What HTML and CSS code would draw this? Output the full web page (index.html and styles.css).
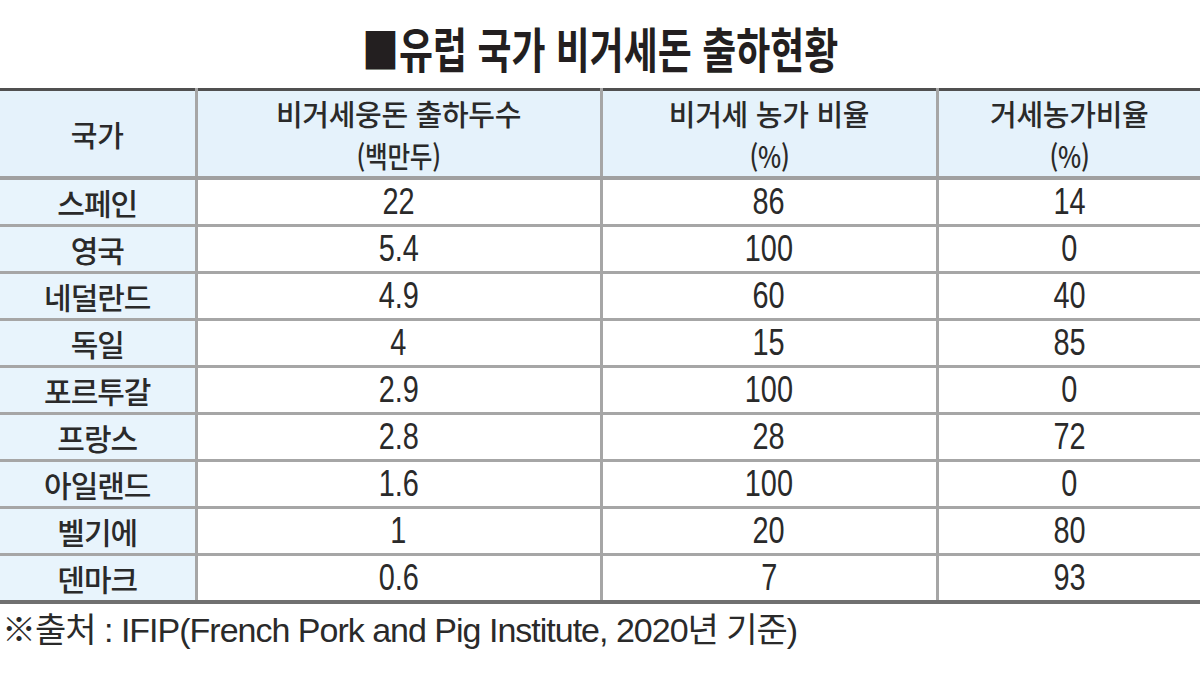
FILE: index.html
```html
<!DOCTYPE html>
<html lang="ko">
<head>
<meta charset="utf-8">
<title>유럽 국가 비거세돈 출하현황</title>
<link rel="stylesheet" href="styles.css">
</head>
<body>
<main class="page">
  <h1 class="title"><span class="title-text">■유럽 국가 비거세돈 출하현황</span></h1>
  <table class="data">
    <colgroup>
      <col class="c1"><col class="c2"><col class="c3"><col class="c4">
    </colgroup>
    <thead>
      <tr>
        <th class="name">국가</th>
        <th>비거세웅돈 출하두수<br><span class="paren">(백만두)</span></th>
        <th>비거세 농가 비율<br><span class="paren">(%)</span></th>
        <th>거세농가비율<br><span class="paren">(%)</span></th>
      </tr>
    </thead>
    <tbody>
      <tr><td class="name">스페인</td><td class="num"><span class="n">22</span></td><td class="num"><span class="n">86</span></td><td class="num"><span class="n">14</span></td></tr>
      <tr><td class="name">영국</td><td class="num"><span class="n">5.4</span></td><td class="num"><span class="n">100</span></td><td class="num"><span class="n">0</span></td></tr>
      <tr><td class="name">네덜란드</td><td class="num"><span class="n">4.9</span></td><td class="num"><span class="n">60</span></td><td class="num"><span class="n">40</span></td></tr>
      <tr><td class="name">독일</td><td class="num"><span class="n">4</span></td><td class="num"><span class="n">15</span></td><td class="num"><span class="n">85</span></td></tr>
      <tr><td class="name">포르투갈</td><td class="num"><span class="n">2.9</span></td><td class="num"><span class="n">100</span></td><td class="num"><span class="n">0</span></td></tr>
      <tr><td class="name">프랑스</td><td class="num"><span class="n">2.8</span></td><td class="num"><span class="n">28</span></td><td class="num"><span class="n">72</span></td></tr>
      <tr><td class="name">아일랜드</td><td class="num"><span class="n">1.6</span></td><td class="num"><span class="n">100</span></td><td class="num"><span class="n">0</span></td></tr>
      <tr><td class="name">벨기에</td><td class="num"><span class="n">1</span></td><td class="num"><span class="n">20</span></td><td class="num"><span class="n">80</span></td></tr>
      <tr><td class="name">덴마크</td><td class="num"><span class="n">0.6</span></td><td class="num"><span class="n">7</span></td><td class="num"><span class="n">93</span></td></tr>
    </tbody>
  </table>
  <p class="source">※출처 : IFIP(French Pork and Pig Institute, 2020년 기준)</p>
</main>
</body>
</html>
```

FILE: styles.css
```css
html, body {
  margin: 0;
  padding: 0;
  background: #ffffff;
}

.page {
  width: 1200px;
  height: 674px;
  overflow: hidden;
  font-family: "Noto Sans CJK KR", "Liberation Sans", sans-serif;
  color: #2a2a2a;
}

.title {
  margin: 0;
  height: 88px;
  display: flex;
  justify-content: center;
  align-items: center;
  padding-top: 6px;
  box-sizing: border-box;
}

.title-text {
  display: inline-block;
  font-size: 48px;
  font-weight: 700;
  line-height: 1;
  color: #231f20;
  transform: scaleX(0.77);
  white-space: nowrap;
}

.data {
  width: 1200px;
  table-layout: fixed;
  border-collapse: collapse;
  border-top: 3px solid #505050;
  border-bottom: 4px solid #707070;
}

.c1 { width: 196px; }
.c2 { width: 405px; }
.c3 { width: 336px; }
.c4 { width: 263px; }

.data th,
.data td {
  padding: 0;
  text-align: center;
  border: 3px solid #a6a6a6;
  border-top: none;
}

.data tr > :first-child { border-left: none; }
.data tr > :last-child { border-right: none; }

.data thead th {
  height: 85px;
  background: #e5f2fb;
  font-weight: 500;
  font-size: 29px;
  line-height: 42px;
  letter-spacing: -0.3px;
  border-bottom: 4px solid #a0a0a0;
  vertical-align: middle;
}

.paren {
  display: inline-block;
  transform: scaleX(0.85);
}

.data tbody td {
  height: 44px;
  font-size: 30px;
  line-height: 44px;
  font-weight: 500;
}

.data td.name {
  background: #e8f4fc;
  letter-spacing: -1px;
}

.data td.num {
  font-family: "Liberation Sans", sans-serif;
  font-size: 37px;
  font-weight: 400;
  background: #ffffff;
}

.n {
  display: inline-block;
  transform: scaleX(0.78);
}

.source {
  margin: 0;
  padding: 6px 0 0 2px;
  font-family: "Liberation Sans", "Noto Sans CJK KR", sans-serif;
  font-size: 34px;
  line-height: 40px;
  letter-spacing: -1px;
  color: #2a2a2a;
  white-space: nowrap;
}
```
